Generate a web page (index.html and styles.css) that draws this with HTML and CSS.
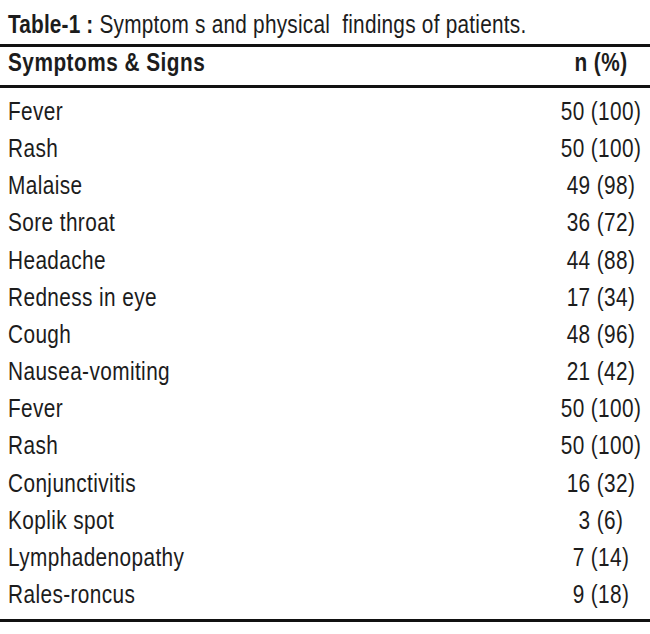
FILE: index.html
```html
<!DOCTYPE html>
<html lang="en">
<head>
<meta charset="utf-8">
<title>Table-1</title>
<link rel="stylesheet" href="styles.css">
</head>
<body>
<div class="frame">
  <div class="sheet">
    <div class="caption"><b>Table-1 :</b> Symptom s and physical&nbsp; findings of patients.</div>
    <table class="data">
      <thead>
        <tr><th class="name">Symptoms &amp; Signs</th><th class="num">n (%)</th></tr>
      </thead>
      <tbody>
        <tr class="first"><td class="name">Fever</td><td class="num">50 (100)</td></tr>
        <tr><td class="name">Rash</td><td class="num">50 (100)</td></tr>
        <tr><td class="name">Malaise</td><td class="num">49 (98)</td></tr>
        <tr><td class="name">Sore throat</td><td class="num">36 (72)</td></tr>
        <tr><td class="name">Headache</td><td class="num">44 (88)</td></tr>
        <tr><td class="name">Redness in eye</td><td class="num">17 (34)</td></tr>
        <tr><td class="name">Cough</td><td class="num">48 (96)</td></tr>
        <tr><td class="name">Nausea-vomiting</td><td class="num">21 (42)</td></tr>
        <tr><td class="name">Fever</td><td class="num">50 (100)</td></tr>
        <tr><td class="name">Rash</td><td class="num">50 (100)</td></tr>
        <tr><td class="name">Conjunctivitis</td><td class="num">16 (32)</td></tr>
        <tr><td class="name">Koplik spot</td><td class="num">3 (6)</td></tr>
        <tr><td class="name">Lymphadenopathy</td><td class="num">7 (14)</td></tr>
        <tr class="last"><td class="name">Rales-roncus</td><td class="num">9 (18)</td></tr>
      </tbody>
    </table>
  </div>
</div>
</body>
</html>
```
FILE: styles.css
```css
html, body {
  margin: 0;
  padding: 0;
  background: #ffffff;
  overflow: hidden;
}
.frame {
  width: 650px;
  height: 634px;
  overflow: hidden;
}
/* the source uses a condensed face; a regular face is narrowed to match */
.sheet {
  width: 812.5px;
  transform: scaleX(0.8);
  transform-origin: 0 0;
  font-family: "Liberation Sans", Arial, sans-serif;
  font-size: 26px;
  color: #1c1c1c;
  letter-spacing: 0.5px;
}
.caption {
  padding: 9px 0 0 10px;
  line-height: 30px;
  height: 30px;
  margin-bottom: 5px;
  white-space: nowrap;
  letter-spacing: 0.3px;
}
.caption b {
  font-weight: bold;
  letter-spacing: 0.2px;
}
.data {
  width: 812.5px;
  border-collapse: collapse;
  border-top: 3px solid #111111;
  border-bottom: 3px solid #111111;
}
.data th {
  font-weight: bold;
  letter-spacing: 0.6px;
  line-height: 31px;
  padding: 0 0 7px 0;
  border-bottom: 3px solid #111111;
  white-space: nowrap;
}
.data td {
  line-height: 37.15px;
  padding: 0;
  white-space: nowrap;
}
.data .name {
  text-align: left;
  padding-left: 10px;
}
.data .num {
  width: 122.5px;
  text-align: center;
}
.data tr.first td {
  padding-top: 5px;
}
.data tr.last td {
  padding-bottom: 6px;
}
```
